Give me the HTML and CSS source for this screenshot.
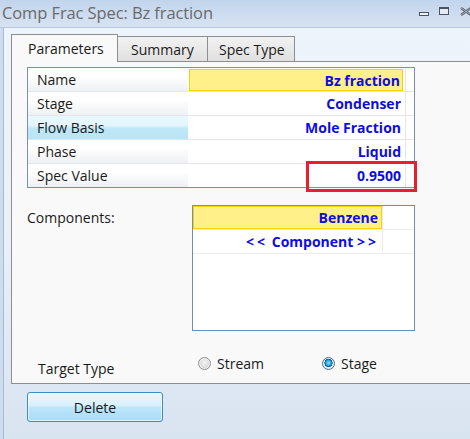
FILE: index.html
```html
<!DOCTYPE html>
<html>
<head>
<meta charset="utf-8">
<link rel="stylesheet" href="styles.css">
</head>
<body>
<div class="window">
  <div class="titlebar">
    <span class="title">Comp Frac Spec: Bz fraction</span>
    <div class="controls">
      <span class="ctl min"></span>
      <span class="ctl max"></span>
      <svg class="ctl close" width="12" height="9" viewBox="0 0 12 9"><path d="M1 1 L11 8 M11 1 L1 8" stroke="#4a5466" stroke-width="2.2" fill="none"/><path d="M1 1 L11 8 M11 1 L1 8" stroke="#eef2f8" stroke-width="0.6" fill="none"/></svg>
    </div>
  </div>
  <div class="frame">
    <div class="tabs">
      <div class="tab active">Parameters</div>
      <div class="tab">Summary</div>
      <div class="tab">Spec Type</div>
    </div>
    <div class="panel">
      <div class="grid-wrap">
        <div class="pgrid">
          <div class="prow"><div class="plabel">Name</div><div class="pval"><span class="sel">Bz fraction</span></div><div class="pend"></div></div>
          <div class="prow"><div class="plabel">Stage</div><div class="pval">Condenser</div><div class="pend"></div></div>
          <div class="prow"><div class="plabel hl">Flow Basis</div><div class="pval">Mole Fraction</div><div class="pend"></div></div>
          <div class="prow"><div class="plabel">Phase</div><div class="pval">Liquid</div><div class="pend"></div></div>
          <div class="prow last"><div class="plabel">Spec Value</div><div class="pval">0.9500</div><div class="pend"></div></div>
        </div>
        <div class="redbox"></div>
      </div>
      <div class="comp-section">
        <div class="comp-label">Components:</div>
        <div class="cgrid">
          <div class="crow"><div class="cval"><span class="sel">Benzene</span></div><div class="cend"></div></div>
          <div class="crow"><div class="cval"><span class="chev">&lt;&lt;</span>&nbsp;Component&nbsp;<span class="chev">&gt;&gt;</span></div><div class="cend"></div></div>
        </div>
      </div>
      <div class="target">
        <div class="target-label">Target Type</div>
        <label class="radio"><span class="dot"></span>Stream</label>
        <label class="radio on"><span class="dot"></span>Stage</label>
      </div>
    </div>
    <div class="actions">
      <button class="btn">Delete</button>
    </div>
  </div>
</div>
</body>
</html>
```

FILE: styles.css
```css
html, body {
  margin: 0;
  padding: 0;
}
body {
  width: 470px;
  height: 439px;
  overflow: hidden;
  font-family: "Open Sans", "Noto Sans", "Liberation Sans", sans-serif;
  font-size: 14px;
  color: #1a1a1a;
  background: #cfdcee;
}
.window {
  display: flex;
  flex-direction: column;
  height: 439px;
}
.titlebar {
  height: 28px;
  flex: none;
  display: flex;
  align-items: center;
  justify-content: space-between;
  background: linear-gradient(#c2d4ec, #d7e3f3);
  border-bottom: 1px solid #b8c8dc;
  box-sizing: border-box;
  padding-left: 2px;
}
.title {
  font-size: 16.5px;
  color: #6a6a6a;
  letter-spacing: -0.1px;
  margin-top: -2px;
}
.controls {
  align-self: flex-start;
  display: flex;
  align-items: flex-start;
  padding-top: 7px;
  margin-right: -2px;
}
.ctl {
  display: block;
  box-sizing: border-box;
  flex: none;
}
.min {
  width: 10px;
  height: 4px;
  border: 1px solid #4a5466;
  background: #f0f3f8;
  margin-top: 5px;
  margin-right: 10px;
}
.max {
  width: 10px;
  height: 8px;
  border: 1px solid #4a5466;
  border-top-width: 2px;
  background: #e6ebf2;
  margin-right: 11px;
}
.frame {
  flex: 1;
  display: flex;
  flex-direction: column;
  margin-left: 3px;
  border-left: 1px solid #a9b9cf;
  padding-left: 7px;
  padding-top: 5px;
  background: linear-gradient(#eef4fb 0, #e9f0f8 50%, #d9e4f1 100%);
}
.tabs {
  display: flex;
  align-items: flex-end;
  height: 28px;
  position: relative;
  z-index: 1;
}
.tab {
  box-sizing: border-box;
  height: 25px;
  padding: 0 0 0 13px;
  display: flex;
  align-items: center;
  white-space: nowrap;
  border: 1px solid #8e8e8e;
  border-left: none;
  border-bottom: none;
  background: linear-gradient(#f2f2f2, #e0e0e0);
  color: #1a1a1a;
}
.tab.active {
  height: 28px;
  border-left: 1px solid #8e8e8e;
  background: #f9f9f9;
  width: 107px;
  padding-left: 16px;
  margin-bottom: -1px;
  padding-bottom: 1px;
}
.tab:nth-child(2) { width: 90px; }
.tab:nth-child(3) { width: 87px; padding-left: 11px; }
.panel {
  box-sizing: border-box;
  height: 323px;
  margin-right: -4px;
  border: 1px solid #8e8e8e;
  background: #f9f9f9;
  padding: 5px 0 0 15px;
  display: flex;
  flex-direction: column;
}
.grid-wrap {
  position: relative;
  width: 388px;
}
.pgrid {
  box-sizing: border-box;
  width: 388px;
  border: 1px solid #7890b4;
  background: #fff;
}
.prow {
  display: flex;
  height: 24px;
  border-bottom: 1px solid #e6e6e6;
  box-sizing: border-box;
}
.prow.last { border-bottom: none; height: 23px; }
.plabel {
  width: 160px;
  flex: none;
  box-sizing: border-box;
  padding-left: 9px;
  display: flex;
  align-items: center;
  background: linear-gradient(#ffffff 35%, #eef0f3);
  color: #1a1a1a;
}
.plabel.hl {
  background: linear-gradient(#e6f7fd 0, #e4f6fc 40%, #bde7f7 55%, #b9e5f6 100%);
}
.pval {
  flex: 1;
  display: flex;
  align-items: center;
  justify-content: flex-end;
  padding-right: 4px;
  font-weight: bold;
  color: #0d0de0;
  border-right: 1px solid #e6e6e6;
  position: relative;
}
.pend {
  width: 8px;
  flex: none;
}
.sel {
  position: absolute;
  left: 1px;
  right: 2px;
  top: 1px;
  bottom: 0;
  background: #fff08a;
  border: 1px solid #f3d500;
  display: flex;
  align-items: center;
  justify-content: flex-end;
  padding-right: 2px;
}
.redbox {
  position: absolute;
  left: 279px;
  top: 94px;
  width: 111px;
  height: 31px;
  box-sizing: border-box;
  border: 3px solid #e8202c;
}
.comp-section {
  display: flex;
  margin-top: 17px;
}
.comp-label {
  width: 165px;
  padding-top: 3px;
  color: #1a1a1a;
}
.cgrid {
  box-sizing: border-box;
  width: 223px;
  height: 126px;
  border: 1px solid #6f8ebf;
  background: #fff;
}
.crow {
  display: flex;
  height: 24px;
  border-bottom: 1px solid #ececec;
  box-sizing: border-box;
}
.cval {
  width: 190px;
  flex: none;
  position: relative;
  display: flex;
  align-items: center;
  justify-content: flex-end;
  padding-right: 6px;
  box-sizing: border-box;
  font-weight: bold;
  color: #0d0de0;
  border-right: 1px solid #ececec;
  white-space: nowrap;
}
.chev {
  letter-spacing: 3px;
}
.chev:last-child {
  letter-spacing: 3px;
  margin-right: -3px;
}
.cval .sel {
  left: 0;
  right: 0;
  top: 0;
  bottom: 0;
  padding-right: 3px;
}
.target {
  display: flex;
  align-items: flex-start;
  margin-top: 23px;
}
.target-label {
  width: 171px;
  padding-left: 11px;
  padding-top: 5px;
  box-sizing: border-box;
  color: #1a1a1a;
}
.radio {
  display: flex;
  align-items: center;
  gap: 6px;
  color: #1a1a1a;
}
.radio:nth-child(2) { width: 124px; }
.dot {
  width: 13px;
  height: 13px;
  box-sizing: border-box;
  border-radius: 50%;
  border: 1px solid #8f8f8f;
  background: radial-gradient(circle at 50% 40%, #f4f4f4 0, #d6d6d6 70%, #c8c8c8 100%);
  box-shadow: inset 0 0 0 1px #f2f2f2;
}
.radio.on .dot {
  border-color: #4f6f8f;
  background: radial-gradient(circle at 50% 45%, #8fe2ff 0, #1e9ad8 35%, #0b4f86 48%, #e8edf2 52%, #dfe5ec 100%);
  box-shadow: none;
}
.actions {
  padding: 8px 0 0 16px;
}
.btn {
  font: inherit;
  width: 136px;
  height: 30px;
  border: 1px solid #3a8fbf;
  border-radius: 3px;
  background: linear-gradient(#eaf6fd 0, #d9f0fc 45%, #bee6fa 50%, #a9dcf6 100%);
  box-shadow: inset 0 0 0 1px rgba(255,255,255,0.6);
  color: #1a1a1a;
  padding: 0;
}
```
